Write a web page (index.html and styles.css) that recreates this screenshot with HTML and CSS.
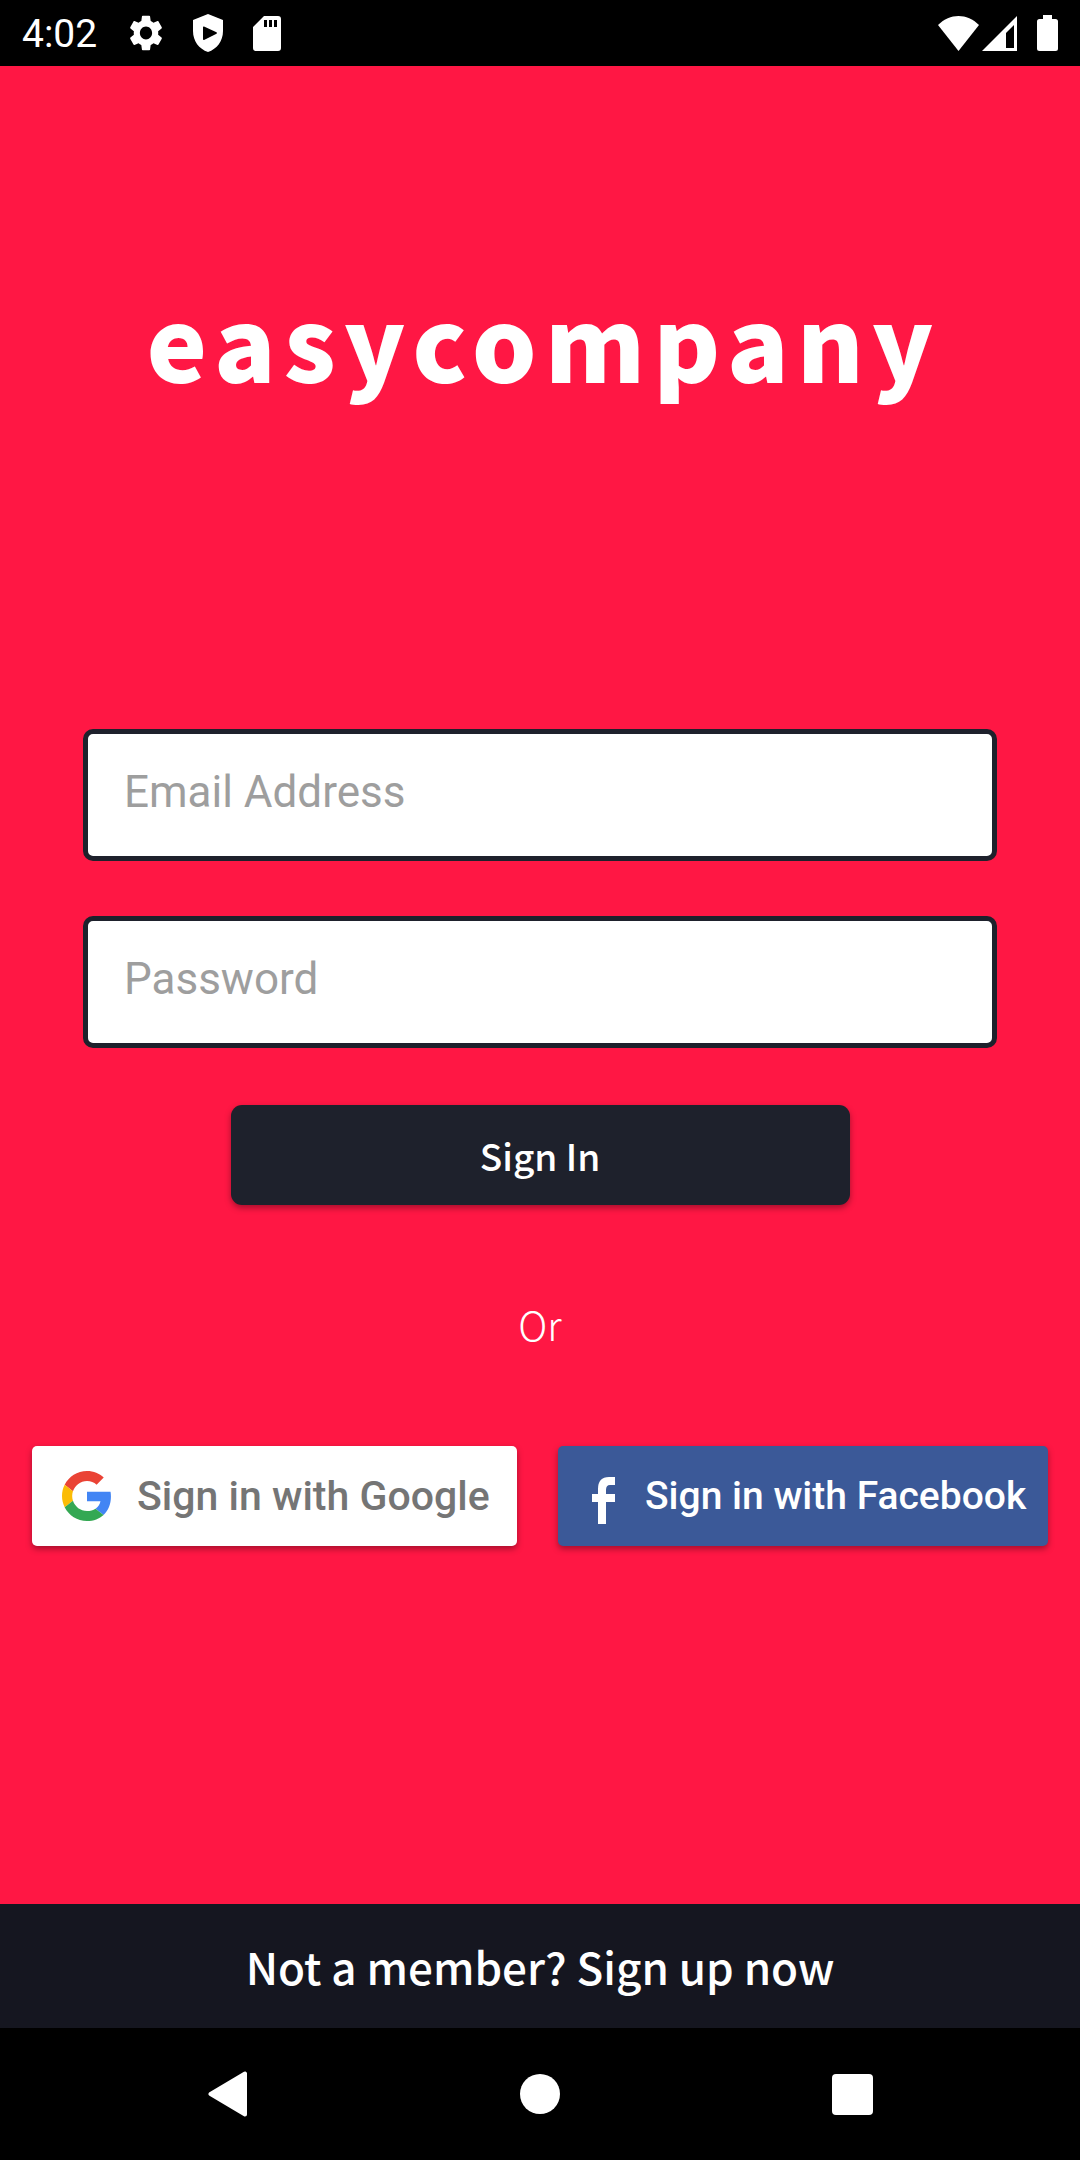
FILE: index.html
```html
<!DOCTYPE html>
<html lang="en">
<head>
<meta charset="utf-8">
<meta name="viewport" content="width=device-width, initial-scale=1">
<title>easycompany</title>
<link rel="stylesheet" href="styles.css">
</head>
<body>
<div class="screen">
  <header class="status">
    <div class="status-left">
      <span class="clock">4:02</span>
      <svg class="icon" width="34" height="36" viewBox="2 2 20 20" preserveAspectRatio="none" aria-hidden="true"><path fill="#fff" d="M19.14 12.94c.04-.3.06-.61.06-.94 0-.32-.02-.64-.07-.94l2.03-1.58c.18-.14.23-.41.12-.61l-1.92-3.32c-.12-.22-.37-.29-.59-.22l-2.39.96c-.5-.38-1.03-.7-1.62-.94l-.36-2.54c-.04-.24-.24-.41-.48-.41h-3.84c-.24 0-.43.17-.47.41l-.36 2.54c-.59.24-1.13.57-1.62.94l-2.39-.96c-.22-.08-.47 0-.59.22L2.740 8.870c-.12.21-.08.47.12.61l2.03 1.58c-.05.3-.09.63-.09.94s.02.64.07.94l-2.03 1.58c-.18.14-.23.41-.12.61l1.92 3.32c.12.22.37.29.59.22l2.39-.96c.5.38 1.03.7 1.62.94l.36 2.54c.05.24.24.41.48.41h3.84c.24 0 .44-.17.47-.41l.36-2.54c.59-.24 1.13-.56 1.62-.94l2.39.96c.22.08.47 0 .59-.22l1.92-3.32c.12-.22.07-.47-.12-.61l-2.01-1.58zM12 15.6c-1.98 0-3.6-1.62-3.6-3.6s1.62-3.6 3.6-3.6 3.6 1.62 3.6 3.6-1.62 3.6-3.6 3.6z"/></svg>
      <svg class="icon" width="32" height="38" viewBox="0 0 32 38" aria-hidden="true"><path fill="#fff" fill-rule="evenodd" d="M16 0 31 6V17C31 27 25 35 16 38 7 35 1 27 1 17V6ZM12 12.500Q11 12 11 13.500V25Q11 26.500 12.500 25.800L24.500 19.800Q25.500 19 24.500 18.200Z"/></svg>
      <svg class="icon" width="28" height="35" viewBox="0 0 28 35" aria-hidden="true"><path fill="#fff" fill-rule="evenodd" d="M11 0H25Q28 0 28 3V32Q28 35 25 35H3Q0 35 0 32V11ZM11 4V11H14V4ZM16 4V11H19V4ZM21 4V11H24V4Z"/></svg>
    </div>
    <div class="status-right">
      <svg width="41" height="35" viewBox="0 0 41 35" aria-hidden="true"><path fill="#fff" d="M0 9C12-3 29-3 41 9L20.500 35Z"/></svg>
      <svg width="35" height="35" viewBox="0 0 35 35" aria-hidden="true"><path fill="#fff" fill-rule="evenodd" d="M35 0V35H0ZM32 9 24 17V32H32Z"/></svg>
      <svg class="battery" width="21" height="36" viewBox="0 0 21 36" aria-hidden="true"><path fill="#fff" d="M6 0H15V4H18.500Q21 4 21 6.500V33.500Q21 36 18.500 36H2.500Q0 36 0 33.500V6.500Q0 4 2.500 4H6Z"/></svg>
    </div>
  </header>

  <main class="main">
    <h1 class="brand">easycompany</h1>
    <form class="form">
      <input class="field" type="email" placeholder="Email Address" aria-label="Email Address">
      <input class="field" type="password" placeholder="Password" aria-label="Password">
      <button class="submit" type="submit">Sign In</button>
    </form>
    <p class="or">Or</p>
    <div class="social">
      <button class="social-btn google" type="button">
        <svg width="50" height="50" viewBox="0 0 48 48" aria-hidden="true">
          <path fill="#EA4335" d="M24 9.500c3.540 0 6.710 1.220 9.210 3.600l6.850-6.850C35.900 2.380 30.470 0 24 0 14.620 0 6.510 5.380 2.560 13.220l7.980 6.190C12.430 13.720 17.740 9.500 24 9.500z"/>
          <path fill="#4285F4" d="M46.980 24.550c0-1.570-.15-3.090-.38-4.550H24v9.020h12.940c-.58 2.960-2.260 5.480-4.780 7.180l7.730 6c4.510-4.180 7.090-10.360 7.090-17.650z"/>
          <path fill="#FBBC05" d="M10.530 28.590c-.48-1.450-.76-2.990-.76-4.590s.27-3.140.76-4.590l-7.980-6.190C.92 16.460 0 20.120 0 24c0 3.880.92 7.540 2.560 10.780l7.970-6.190z"/>
          <path fill="#34A853" d="M24 48c6.480 0 11.930-2.130 15.890-5.810l-7.730-6c-2.150 1.450-4.920 2.300-8.160 2.300-6.260 0-11.570-4.220-13.470-9.910l-7.980 6.190C6.510 42.620 14.620 48 24 48z"/>
        </svg>
        <span>Sign in with Google</span>
      </button>
      <button class="social-btn facebook" type="button">
        <svg width="23" height="55" viewBox="0 -8 23 55" aria-hidden="true"><path fill="#fff" d="M6 47V25H0V17H6V12Q6 0 17 0H23V8H18Q14 8 14 13V17H23V25H14V47Z"/></svg>
        <span>Sign in with Facebook</span>
      </button>
    </div>
  </main>

  <a class="signup" href="#signup">Not a member? Sign up now</a>

  <nav class="navbar">
    <button class="nav-btn" type="button" aria-label="Back"><svg width="40" height="46" viewBox="0 0 40 46" aria-hidden="true"><path fill="#fff" stroke="#fff" stroke-width="4" stroke-linejoin="round" d="M37 2.500V43.500L2.500 23Z"/></svg></button>
    <button class="nav-btn" type="button" aria-label="Home"><svg width="40" height="40" viewBox="0 0 40 40" aria-hidden="true"><circle cx="20" cy="20" r="20" fill="#fff"/></svg></button>
    <button class="nav-btn" type="button" aria-label="Recent apps"><svg width="41" height="41" viewBox="0 0 41 41" aria-hidden="true"><rect width="41" height="41" rx="4" fill="#fff"/></svg></button>
  </nav>
</div>
</body>
</html>
```
FILE: styles.css
```css
* {
  box-sizing: border-box;
}

body {
  margin: 0;
  background: #ff1744;
  font-family: Roboto, sans-serif;
}

svg {
  display: block;
  flex: none;
}

button,
input {
  font: inherit;
  border: 0;
  margin: 0;
}

.screen {
  display: flex;
  flex-direction: column;
  min-height: 100vh;
}

.status {
  display: flex;
  justify-content: space-between;
  align-items: center;
  height: 66px;
  padding: 0 22px;
  background: #000;
  color: #fff;
}

.status-left {
  display: flex;
  align-items: center;
  gap: 29px;
}

.clock {
  padding: 2px 3px 0 0;
  font-size: 39px;
  line-height: 48px;
}

.status-right {
  display: flex;
  align-items: center;
  gap: 3px;
}

.battery {
  margin-left: 17px;
}

.main {
  flex: 1;
  display: flex;
  flex-direction: column;
  align-items: center;
}

.brand {
  margin: 193px 0 0;
  padding-left: 8px;
  font: 900 102px/160px "Noto Sans CJK KR", sans-serif;
  letter-spacing: 8px;
  color: #fff;
}

.form {
  display: flex;
  flex-direction: column;
  align-items: center;
  align-self: stretch;
  padding: 0 83px;
  margin-top: 310px;
}

.field {
  width: 100%;
  height: 132px;
  margin-bottom: 55px;
  padding: 0 36px 6px;
  border: 5px solid #1e212c;
  border-radius: 10px;
  background: #fff;
  font-size: 44px;
  color: #1e212c;
}

.field::placeholder {
  color: #9e9e9e;
  opacity: 1;
}

.submit {
  width: 100%;
  max-width: 619px;
  height: 100px;
  margin-top: 2px;
  border-radius: 11px;
  background: #1e212c;
  box-shadow: 0 3px 6px rgba(0, 0, 0, 0.35);
  font: 500 37px/60px "Noto Sans CJK KR", sans-serif;
  color: #fff;
}

.or {
  margin: 89px 0 92px;
  font: 300 40px/60px "Noto Sans CJK KR", sans-serif;
  color: #fff;
}

.social {
  display: flex;
  gap: 41px;
  align-self: stretch;
  padding: 0 32px;
}

.social-btn {
  display: flex;
  align-items: center;
  height: 100px;
  border-radius: 5px;
  box-shadow: 0 3px 6px rgba(0, 0, 0, 0.35);
  font-weight: 500;
  line-height: 48px;
  white-space: nowrap;
}

.google {
  flex: 1 1 485px;
  gap: 25px;
  padding: 0 0 0 30px;
  background: #fff;
  font-size: 41px;
  color: #757575;
}

.facebook {
  flex: 1 1 490px;
  gap: 30px;
  padding: 0 0 0 34px;
  background: #3b5998;
  font-size: 39px;
  color: #fff;
}

.signup {
  padding: 29px 0;
  background: #151620;
  font: 500 44px/66px "Noto Sans CJK KR", sans-serif;
  text-align: center;
  text-decoration: none;
  color: #fff;
}

.navbar {
  display: flex;
  justify-content: space-around;
  padding: 0 72px;
  height: 132px;
  background: #000;
}

.nav-btn {
  display: flex;
  align-items: center;
  justify-content: center;
  width: 120px;
  padding: 0;
  background: none;
}
```
